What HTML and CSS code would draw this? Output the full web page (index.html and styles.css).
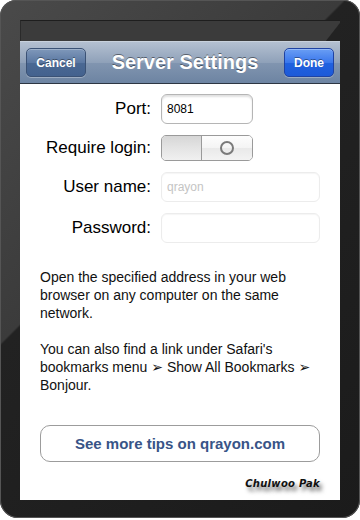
FILE: index.html
```
<!DOCTYPE html>
<html lang="en">
<head>
    <meta charset="UTF-8">
    <title>Server Settings</title>
    <link rel="stylesheet" href="styles.css">
</head>
<body>
<div class="device">
    <div class="screen">
        <div class="status-bar"></div>
        <div class="nav-bar">
            <a class="nav-btn cancel" href="javascript:void(0)">Cancel</a>
            <h1 class="nav-title">Server Settings</h1>
            <a class="nav-btn done" href="javascript:void(0)">Done</a>
        </div>
        <div class="content">
            <div class="form">
                <span class="form-label">Port:</span>
                <input class="field short" type="text" value="8081">

                <span class="form-label">Require login:</span>
                <div class="switch">
                    <span class="switch-on"></span>
                    <span class="switch-off"><i class="ring"></i></span>
                </div>

                <span class="form-label">User name:</span>
                <input class="field wide disabled" type="text" placeholder="qrayon">

                <span class="form-label">Password:</span>
                <input class="field wide disabled" type="password">
            </div>

            <p class="info">Open the specified address in your web browser on any computer on the same network.</p>
            <p class="info">You can also find a link under Safari's bookmarks menu &#10146; Show All Bookmarks &#10146; Bonjour.</p>

            <a class="tips-btn" href="javascript:void(0)">See more tips on qrayon.com</a>
            <div class="signature">Chulwoo Pak</div>
        </div>
    </div>
</div>
</body>
</html>
```

FILE: styles.css
```
html, body {
    margin: 0;
    padding: 0;
    background: #fff;
}
.device {
    width: 360px;
    height: 518px;
    box-sizing: border-box;
    padding: 20px 20px 18px;
    border-radius: 16px 16px 18px 18px;
    background: linear-gradient(135deg, #4a4a4a 0, #3b3b3b 243px, #222 245px, #1b1b1b 100%);
    box-shadow: inset 0 0 0 1px #555;
}
.screen {
    width: 320px;
    height: 480px;
    display: flex;
    flex-direction: column;
    background: #fff;
    font-family: "Liberation Sans", Arial, sans-serif;
}

/* status bar */
.status-bar {
    height: 21px;
    box-sizing: border-box;
    border-top: 1px solid #1e1e1e;
    border-left: 1px solid #2a2a2a;
    background: linear-gradient(128deg, #3b3b3b 252px, #222 253px);
}

/* nav bar */
.nav-bar {
    height: 43px;
    box-sizing: border-box;
    display: flex;
    align-items: center;
    padding: 0 6px;
    background: linear-gradient(#b4c0d1, #8fa1b9 50%, #8195b0 51%, #6d84a2);
    border-top: 1px solid #c8d1dc;
    border-bottom: 1px solid #2d3642;
}
.nav-title {
    flex: 1;
    margin: 0;
    text-align: center;
    font-size: 20px;
    font-weight: bold;
    color: #fff;
    text-shadow: 0 -1px 0 rgba(0, 0, 0, .45);
}
.nav-btn {
    height: 29px;
    box-sizing: border-box;
    display: flex;
    align-items: center;
    justify-content: center;
    border-radius: 5px;
    font-size: 12px;
    font-weight: bold;
    color: #fff;
    text-decoration: none;
    text-shadow: 0 -1px 0 rgba(0, 0, 0, .4);
}
.cancel {
    width: 60px;
    border: 1px solid #3b5275;
    background: linear-gradient(#7f98ba, #5b78a2 50%, #4a6893 51%, #44628e);
    box-shadow: inset 0 1px 0 rgba(255, 255, 255, .25), 0 1px 0 rgba(255, 255, 255, .3);
}
.done {
    width: 50px;
    border: 1px solid #1f43a3;
    background: linear-gradient(#6a9ef4, #3a77ec 50%, #2061e0 51%, #1d5ad8);
    box-shadow: inset 0 1px 0 rgba(255, 255, 255, .3), 0 1px 0 rgba(255, 255, 255, .3);
}

/* content */
.content {
    flex: 1;
    padding: 10px 20px 0;
}
.form {
    display: grid;
    grid-template-columns: 111px auto;
    column-gap: 10px;
    row-gap: 11px;
    align-items: center;
    justify-items: start;
}
.form-label {
    justify-self: end;
    font-size: 17px;
    color: #000;
}
.field {
    height: 30px;
    box-sizing: border-box;
    padding: 0 5px;
    border-radius: 6px;
    font-family: "Liberation Sans", Arial, sans-serif;
    font-size: 12px;
    color: #000;
    outline: none;
}
.field.short {
    width: 92px;
    border: 1px solid #b5b5b5;
    box-shadow: inset 0 2px 2px rgba(0, 0, 0, .12);
}
.field.wide {
    width: 159px;
}
.field.disabled {
    border: 1px solid #ececec;
    box-shadow: inset 0 1px 1px rgba(0, 0, 0, .04);
    background: #fff;
}
.field::placeholder {
    color: #c4c4c4;
}

/* switch */
.switch {
    width: 92px;
    height: 26px;
    box-sizing: border-box;
    display: flex;
    border: 1px solid #9a9a9a;
    border-radius: 5px;
    overflow: hidden;
}
.switch-on {
    width: 39px;
    border-right: 1px solid #9a9a9a;
    background: linear-gradient(#d6d6d6, #e4e4e4 50%, #f0f0f0);
}
.switch-off {
    flex: 1;
    display: flex;
    align-items: center;
    justify-content: center;
    background: linear-gradient(#fdfdfd, #f4f4f4 50%, #e9e9e9 51%, #f3f3f3);
}
.ring {
    width: 10px;
    height: 10px;
    border: 2px solid #7a7a7a;
    border-radius: 50%;
}

/* text */
.info {
    margin: 25px 0 0;
    font-family: "Liberation Sans", "DejaVu Sans", sans-serif;
    font-size: 14px;
    line-height: 18px;
    color: #111;
}
.info + .info {
    margin-top: 18px;
}

/* tips button */
.tips-btn {
    display: flex;
    align-items: center;
    justify-content: center;
    height: 37px;
    box-sizing: border-box;
    margin-top: 31px;
    border: 1px solid #9c9c9c;
    border-radius: 10px;
    font-size: 15px;
    font-weight: bold;
    color: #385487;
    text-decoration: none;
}

.signature {
    margin-top: 16px;
    text-align: right;
    padding-right: 0;
    font-family: "DejaVu Sans", sans-serif;
    font-size: 10px;
    font-style: italic;
    font-weight: bold;
    letter-spacing: 0.3px;
    color: #111;
    text-shadow: 3px 4px 4px rgba(0, 0, 0, .6);
}
```
